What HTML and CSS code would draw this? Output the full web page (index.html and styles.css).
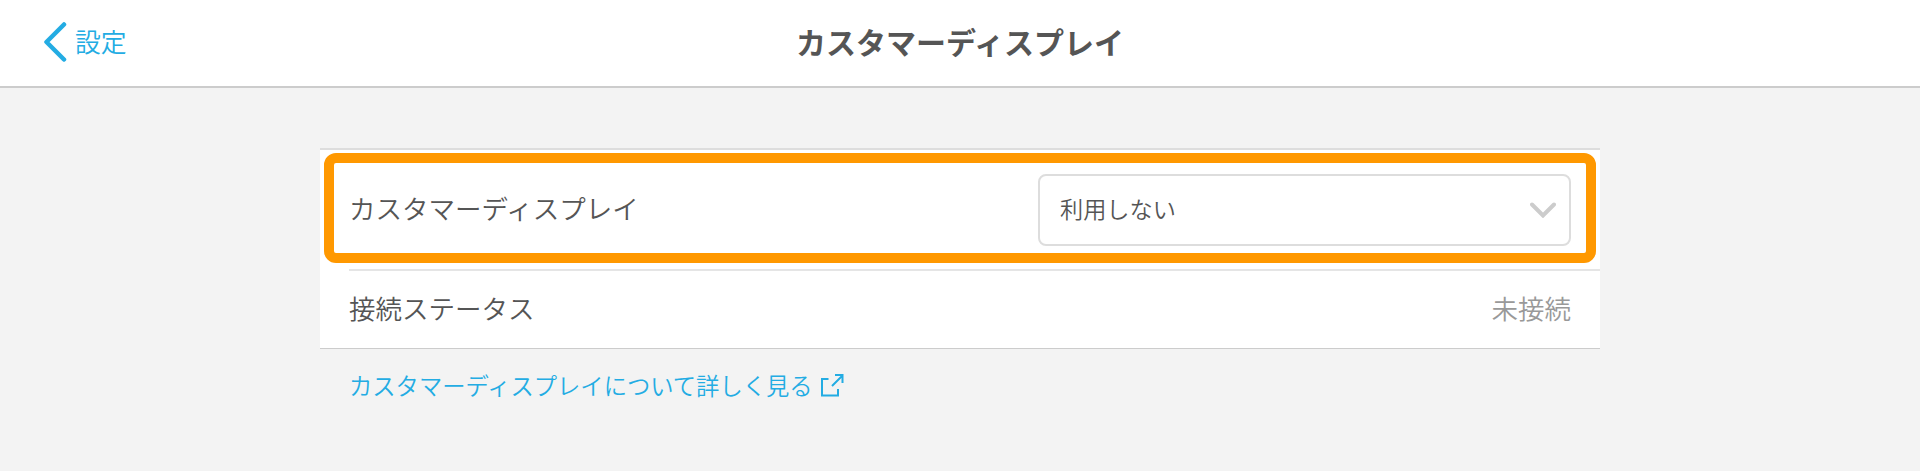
FILE: index.html
```html
<!DOCTYPE html>
<html lang="ja">
<head>
  <meta charset="UTF-8">
  <meta name="viewport" content="width=device-width, initial-scale=1.0">
  <title>カスタマーディスプレイ</title>
  <link rel="stylesheet" href="styles.css">
</head>
<body>
  <header class="header">
    <a class="back" href="#">
      <svg class="back-icon" width="24" height="42" viewBox="0 0 24 42">
        <path d="M21 3.500 3.500 21 21 38.500"/>
      </svg>
      <span class="back-text">設定</span>
    </a>
    <h1 class="title">カスタマーディスプレイ</h1>
  </header>
  <main class="content">
    <div class="settings">
      <div class="row row-display">
        <span class="label">カスタマーディスプレイ</span>
        <button class="select">
          <span class="select-text">利用しない</span>
          <svg class="select-icon" width="26" height="16" viewBox="0 0 26 16">
            <path d="M2 2.500l11 11 11-11"/>
          </svg>
        </button>
        <div class="highlight"></div>
      </div>
      <div class="row row-status">
        <span class="label">接続ステータス</span>
        <span class="status">未接続</span>
      </div>
    </div>
    <a class="help" href="#">
      <span>カスタマーディスプレイについて詳しく見る</span>
      <svg class="help-icon" width="24" height="24" viewBox="0 0 24 24">
        <path d="M8.500 6H2v16.500h16V16M12 13 22.500 2.500M15 2h7.500v8"/>
      </svg>
    </a>
  </main>
</body>
</html>
```

FILE: styles.css
```css
* {
  box-sizing: border-box;
}

body {
  margin: 0;
  min-height: 100vh;
  background-color: #f3f3f3;
  color: #555;
  font-family: "Noto Sans CJK JP", sans-serif;
  font-weight: 350;
}

a {
  color: #23ace3;
  text-decoration: none;
}

svg {
  fill: none;
  stroke: currentColor;
}

.header {
  display: grid;
  grid-template-columns: 1fr auto 1fr;
  align-items: center;
  height: 88px;
  padding: 0 43px 2px;
  background-color: #fff;
  border-bottom: 2px solid #ccc;
}

.back {
  display: flex;
  align-items: center;
  gap: 8px;
  font-size: 25.800px;
  line-height: 40px;
}

.back-text {
  padding-bottom: 3px;
}

.back-icon {
  stroke-width: 4.500;
  stroke-linecap: round;
  stroke-linejoin: round;
}

.title {
  margin: 0;
  padding-bottom: 2px;
  font-size: 30px;
  font-weight: 700;
  line-height: 40px;
}

.content {
  width: 1280px;
  margin: 60px auto 0;
}

.settings {
  background-color: #fff;
  border-top: 2px solid #ddd;
  border-bottom: 1px solid #ccc;
}

.row {
  display: flex;
  align-items: center;
  justify-content: space-between;
  padding: 0 29px;
  font-size: 26.500px;
}

.row-display {
  position: relative;
  height: 119px;
}

.row-status {
  height: 79px;
  padding-left: 0;
  margin-left: 29px;
  border-top: 2px solid #e5e5e5;
}

.label,
.status {
  padding-bottom: 4px;
}

.select {
  display: flex;
  align-items: center;
  justify-content: space-between;
  width: 533px;
  height: 72px;
  padding: 0 13px 0 20px;
  background-color: #fff;
  border: 2px solid #ddd;
  border-radius: 8px;
  color: inherit;
  font: inherit;
  font-size: 23.200px;
}

.select-text {
  padding-bottom: 3px;
}

.select-icon {
  color: #ccc;
  stroke-width: 4;
  stroke-linecap: round;
}

/* orange frame around the display setting */
.highlight {
  position: absolute;
  top: 3px;
  left: 4px;
  right: 4px;
  height: 110px;
  border: 10px solid #ff9800;
  border-radius: 12px;
  pointer-events: none;
}

.status {
  color: #999;
}

.help {
  display: inline-flex;
  align-items: center;
  gap: 7px;
  margin: 16px 0 0 29px;
  font-size: 23.300px;
  line-height: 40px;
}

.help-icon {
  stroke-width: 2;
}
```
